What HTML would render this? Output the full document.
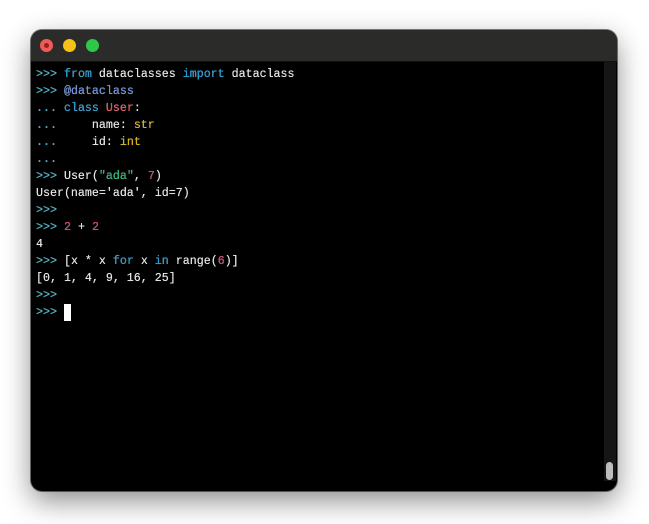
<!DOCTYPE html>
<html><head><meta charset="utf-8"><style>
html,body{margin:0;padding:0;width:649px;height:524px;background:#fff;overflow:hidden}
.win{position:absolute;left:31px;top:30px;width:586px;height:461px;background:#000;border-radius:11px;overflow:hidden;box-shadow:0 10px 28px rgba(0,0,0,0.45),0 0 0 1px rgba(0,0,0,0.5)}
.tb{position:absolute;left:0;top:0;right:0;height:31px;background:#2b2c29;border-bottom:1px solid #111}
.d{position:absolute;top:9px;width:13px;height:13px;border-radius:50%}
.sb{position:absolute;left:573px;top:32px;width:12px;height:419px;background:#161616}
.th{position:absolute;left:575px;top:432px;width:7px;height:18px;border-radius:4px;background:#bdbdbd}
pre{position:absolute;left:5px;top:36px;margin:0;font-family:"Liberation Mono",monospace;font-size:11.65px;line-height:17px;color:#e6e6e6;text-shadow:0 0 0.4px #e6e6e6}
.p{color:#36b3c4}.k{color:#1b9ad6}.dc{color:#6b8ee0}.r{color:#ee4a55}.y{color:#d9b20c}.g{color:#21b36e}.n{color:#dc3a6a}
.cur{display:inline-block;width:7px;height:17px;background:#fff;vertical-align:top}
</style></head><body>
<div class="win">
<div class="tb">
<div class="d" style="left:9px;background:#f25a56"><div style="position:absolute;left:4px;top:4px;width:5px;height:5px;border-radius:50%;background:#8e2320"></div></div>
<div class="d" style="left:32px;background:#f8c11a"></div>
<div class="d" style="left:55px;background:#2ec748"></div>
</div>
<div class="sb"></div><div class="th"></div>
<pre><span class="p">&gt;&gt;&gt;</span> <span class="k">from</span> dataclasses <span class="k">import</span> dataclass
<span class="p">&gt;&gt;&gt;</span> <span class="dc">@dataclass</span>
<span class="p">...</span> <span class="k">class</span> <span class="r">User</span>:
<span class="p">...</span>     name: <span class="y">str</span>
<span class="p">...</span>     id: <span class="y">int</span>
<span class="p">...</span>
<span class="p">&gt;&gt;&gt;</span> User(<span class="g">"ada"</span>, <span class="n">7</span>)
User(name='ada', id=7)
<span class="p">&gt;&gt;&gt;</span>
<span class="p">&gt;&gt;&gt;</span> <span class="n">2</span> + <span class="n">2</span>
4
<span class="p">&gt;&gt;&gt;</span> [x * x <span class="k">for</span> x <span class="k">in</span> range(<span class="n">6</span>)]
[0, 1, 4, 9, 16, 25]
<span class="p">&gt;&gt;&gt;</span>
<span class="p">&gt;&gt;&gt;</span> <span class="cur"></span></pre>
</div>
</body></html>
